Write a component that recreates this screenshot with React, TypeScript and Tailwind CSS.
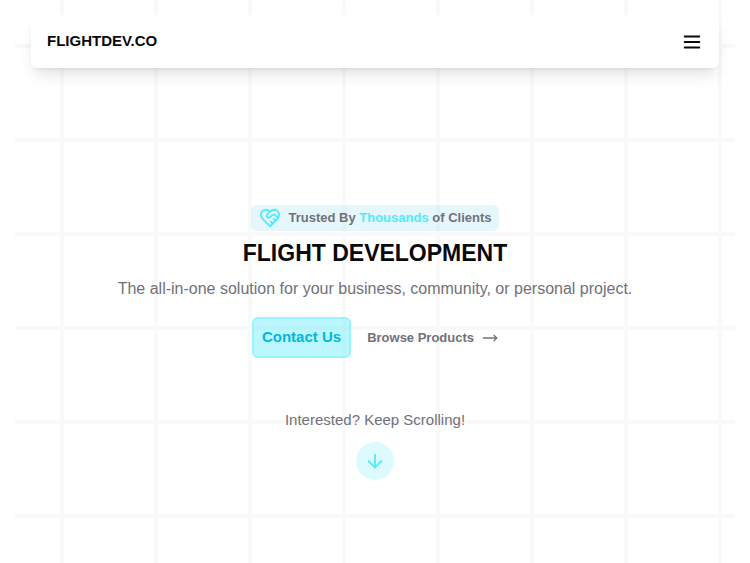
import React, { useState } from 'react';
import { ArrowDown, MoveRight } from 'lucide-react';

const HeartHandshakeIcon: React.FC<{ className?: string }> = ({ className }) => (
  <svg
    viewBox="0 0 24 24"
    fill="none"
    stroke="currentColor"
    strokeWidth={2}
    strokeLinecap="round"
    strokeLinejoin="round"
    className={className}
    aria-hidden="true"
  >
    <path d="M19 14c1.49-1.46 3-3.21 3-5.5A5.5 5.5 0 0 0 16.5 3c-1.76 0-3 .5-4.5 2-1.5-1.5-2.74-2-4.5-2A5.5 5.5 0 0 0 2 8.5c0 2.3 1.5 4.05 3 5.5l7 7Z" />
    <path d="M12 5 9.04 7.96a2.17 2.17 0 0 0 0 3.08c.82.82 2.13.85 3 .07l2.07-1.9a2.82 2.82 0 0 1 3.79 0l2.96 2.66" />
    <path d="m18 15-2-2" />
    <path d="m15 18-2-2" />
  </svg>
);

const MenuIcon: React.FC<{ className?: string }> = ({ className }) => (
  <svg
    viewBox="0 0 24 24"
    fill="none"
    stroke="currentColor"
    strokeWidth={2}
    strokeLinecap="round"
    className={className}
    aria-hidden="true"
  >
    <path d="M4 6h16M4 12h16M4 18h16" />
  </svg>
);

const Navbar: React.FC = () => {
  const [open, setOpen] = useState(false);

  return (
    <header className="mx-4 rounded-md bg-white px-4 shadow-lg">
      <div className="flex h-[53px] items-center justify-between">
        <a href="#" className="text-[15px] font-bold text-zinc-950">
          FLIGHTDEV.CO
        </a>
        <button
          type="button"
          aria-label="Toggle menu"
          aria-expanded={open}
          onClick={() => setOpen(!open)}
          className="text-zinc-950"
        >
          <MenuIcon className="size-[22px]" />
        </button>
      </div>
      {open && (
        <nav className="flex flex-col gap-2 pb-4 text-sm text-zinc-500">
          <a href="#contact">Contact Us</a>
          <a href="#products">Browse Products</a>
        </nav>
      )}
    </header>
  );
};

const Hero: React.FC = () => (
  <main className="flex flex-col items-center pt-[137px] pb-20 text-center text-zinc-500">
    <div className="flex h-[26px] items-center gap-2 rounded-md bg-cyan-500/10 px-2 text-[13px] font-bold">
      <HeartHandshakeIcon className="size-[22px] text-cyan-300" />
      <span>
        Trusted By <span className="text-cyan-300">Thousands</span> of Clients
      </span>
    </div>
    <h1 className="mt-2 text-[23px] leading-7 font-bold text-zinc-950">FLIGHT DEVELOPMENT</h1>
    <p className="mt-[10px] text-base leading-6">
      The all-in-one solution for your business, community, or personal project.
    </p>
    <div className="mt-4 flex items-center gap-4">
      <a
        href="#contact"
        className="flex h-[41px] items-center rounded-md border-2 border-cyan-300/30 bg-cyan-300/40 px-2 text-[15px] font-bold text-cyan-500"
      >
        Contact Us
      </a>
      <a href="#products" className="flex items-center gap-2 text-[13px] font-bold">
        Browse Products
        <MoveRight className="size-4" />
      </a>
    </div>
    <p className="mt-[50px] text-[15px] leading-6">Interested? Keep Scrolling!</p>
    <a
      href="#about"
      aria-label="Scroll down"
      className="mt-[10px] flex size-[38px] items-center justify-center rounded-full bg-cyan-300/20 text-cyan-300"
    >
      <ArrowDown className="size-[22px]" />
    </a>
  </main>
);

export default function App() {
  return (
    <div className="min-h-screen bg-white px-[15px] font-['Liberation_Sans',Arial,sans-serif]">
      <div className="min-h-screen bg-[linear-gradient(to_right,#f9f9f9_4px,transparent_4px),linear-gradient(to_bottom,#f9f9f9_4px,transparent_4px)] bg-[length:94px_94px] bg-[position:45px_44px] pt-[15px]">
        <Navbar />
        <Hero />
      </div>
    </div>
  );
}
